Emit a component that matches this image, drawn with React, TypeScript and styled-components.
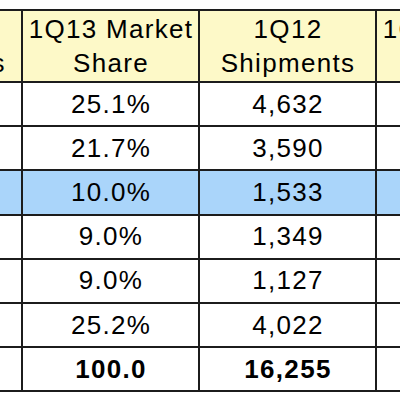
import styled, { createGlobalStyle } from 'styled-components'

const GlobalStyle = createGlobalStyle`
  html, body {
    margin: 0;
    padding: 0;
    background: #ffffff;
  }
`

const Viewport = styled.div`
  width: 400px;
  height: 400px;
  overflow: hidden;
  background: #ffffff;
  padding-top: 9px;
  box-sizing: border-box;
`

const Table = styled.table`
  border-collapse: collapse;
  margin-left: -156px;
  width: 710px;
  min-width: 710px;
  table-layout: fixed;
  font-family: "Liberation Sans", Arial, sans-serif;
  font-size: 26px;
  letter-spacing: 1.3px;
  color: #000;
  white-space: nowrap;
`

const Col = styled.col`
  width: 177px;
`

const HeadCell = styled.th<{ $lead?: boolean }>`
  height: 70px;
  padding: 0 0 0 ${p => (p.$lead ? '10px' : '1px')};
  background: #fdf9c8;
  border: 2px solid #1c1c1c;
  font-weight: normal;
  line-height: 34px;
  text-align: center;
  vertical-align: middle;
`

const Cell = styled.td<{ $hl?: boolean; $bold?: boolean }>`
  height: 42.2px;
  padding: 0 0 0 1px;
  background: ${p => (p.$hl ? '#aad5fa' : '#ffffff')};
  border: 2px solid #1c1c1c;
  font-weight: ${p => (p.$bold ? 'bold' : 'normal')};
  text-align: center;
  vertical-align: middle;
`

const rows = [
  ['7,548', '25.1%', '4,632', '29.3%'],
  ['6,540', '21.7%', '3,590', '22.1%'],
  ['3,014', '10.0%', '1,533', '9.4%'],
  ['2,717', '9.0%', '1,349', '8.3%'],
  ['2,713', '9.0%', '1,127', '6.9%'],
  ['7,587', '25.2%', '4,022', '24.7%'],
]

export default function App() {
  return (
    <Viewport>
      <GlobalStyle />
      <Table>
        <colgroup>
          <Col />
          <Col />
          <Col />
          <Col />
        </colgroup>
        <thead>
          <tr>
            <HeadCell $lead>1Q13<br />Shipments</HeadCell>
            <HeadCell>1Q13 Market<br />Share</HeadCell>
            <HeadCell>1Q12<br />Shipments</HeadCell>
            <HeadCell>1Q12 Market<br />Share</HeadCell>
          </tr>
        </thead>
        <tbody>
          {rows.map((r, i) => (
            <tr key={i}>
              {r.map((v, j) => (
                <Cell key={j} $hl={i === 2}>{v}</Cell>
              ))}
            </tr>
          ))}
          <tr>
            <Cell $bold>30,119</Cell>
            <Cell $bold>100.0</Cell>
            <Cell $bold>16,255</Cell>
            <Cell $bold>100.0</Cell>
          </tr>
        </tbody>
      </Table>
    </Viewport>
  )
}
